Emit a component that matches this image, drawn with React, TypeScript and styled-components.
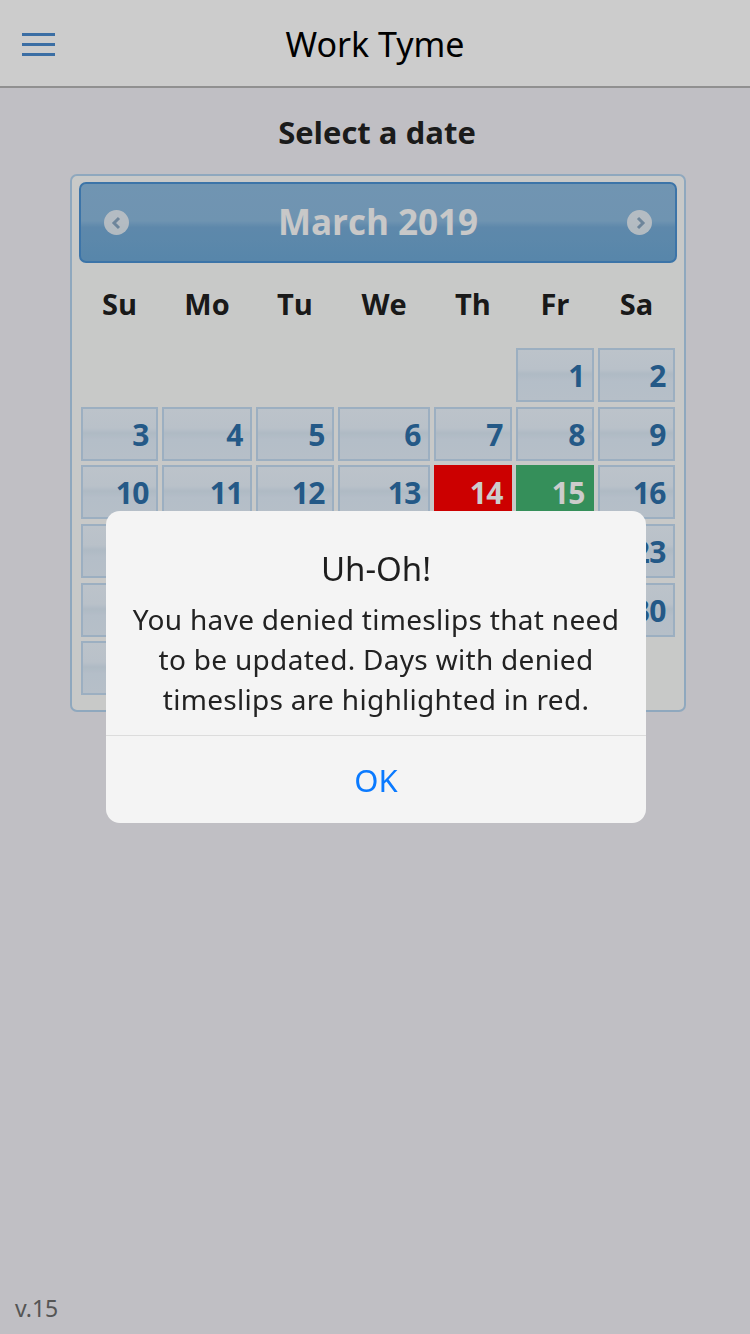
import React from "react";
import styled, { createGlobalStyle } from "styled-components";

const GlobalStyle = createGlobalStyle`
  html, body { margin: 0; padding: 0; }
  body {
    background: #f0eff5;
    font-family: "Noto Sans", "Open Sans", "DejaVu Sans", sans-serif;
    color: #222;
  }
  * { box-sizing: border-box; }
`;

const boldFont = `"Open Sans", "Noto Sans", "DejaVu Sans", sans-serif`;

const Page = styled.div`
  min-height: 1334px;
  display: flex;
  flex-direction: column;
`;

const Header = styled.header`
  height: 88px;
  background: #ffffff;
  border-bottom: 2px solid #b4b4b4;
  display: grid;
  grid-template-columns: 1fr auto 1fr;
  align-items: center;
  padding: 0 22px;
`;

const MenuButton = styled.button`
  justify-self: start;
  width: 33px;
  height: 23px;
  padding: 0;
  border: 0;
  background: transparent;
  display: flex;
  flex-direction: column;
  justify-content: space-between;
  margin-top: 3px;
`;

const MenuLine = styled.span`
  display: block;
  height: 3px;
  width: 100%;
  background: #4a8acd;
`;

const Title = styled.h1`
  margin: 0;
  font-size: 34px;
  font-weight: 400;
  color: #000;
  margin-top: 2px;
`;

const Main = styled.main`
  display: flex;
  flex-direction: column;
`;

const Heading = styled.h2`
  margin: 22px 0 20px;
  text-align: center;
  font-family: ${boldFont};
  font-size: 31px;
  line-height: 44px;
  font-weight: 700;
  color: #222;
  padding-left: 4px;
`;

const Calendar = styled.div`
  width: 616px;
  margin-left: 70px;
  background: #fbfcfb;
  border: 2px solid #b3d2ee;
  border-radius: 7px;
  padding: 6px 7px 15px;
  font-family: ${boldFont};
`;

const CalHeader = styled.div`
  height: 81px;
  border: 2px solid #4b92d2;
  border-radius: 7px;
  background: linear-gradient(
    to bottom,
    #8dbbdf 0%,
    #8bb9de 48%,
    #76abd6 56%,
    #6ea8d5 100%
  );
  display: flex;
  align-items: center;
  padding: 0 23px;
`;

const NavIcon = styled.span`
  width: 25px;
  height: 25px;
  border-radius: 50%;
  background: #f2f5f8;
  opacity: 0.85;
  display: flex;
  align-items: center;
  justify-content: center;
`;

const MonthTitle = styled.div`
  flex: 1;
  text-align: center;
  font-size: 35px;
  font-weight: 700;
  color: #fafafa;
  margin-top: -2px;
`;

const Grid = styled.div`
  display: grid;
  grid-template-columns: 77px 90px 78px 92px 78px 78px 77px;
  column-gap: 4px;
  row-gap: 4.7px;
  margin: 0 2px;
`;

const DayNames = styled(Grid)`
  padding: 20px 0 23px;
`;

const DayName = styled.div`
  text-align: center;
  font-size: 29px;
  line-height: 42px;
  font-weight: 700;
  color: #202020;
`;

const Cell = styled.div<{ $variant?: "default" | "denied" | "approved" }>`
  height: 54px;
  border: 2px solid
    ${(p) =>
      p.$variant === "denied"
        ? "#ff0000"
        : p.$variant === "approved"
        ? "#43b371"
        : "#c3dbf2"};
  background: ${(p) =>
    p.$variant === "denied"
      ? "#ff0000"
      : p.$variant === "approved"
      ? "#43b371"
      : "linear-gradient(to bottom, #ebf4fd 0%, #e8f2fc 38%, #dbe9f6 48%, #e2eefa 62%, #e4effa 100%)"};
  color: ${(p) => (p.$variant && p.$variant !== "default" ? "#ffffff" : "#2e70a9")};
  font-size: 30px;
  font-weight: 700;
  text-align: right;
  line-height: 52px;
  padding-right: 7px;
  letter-spacing: -0.5px;
`;

const Empty = styled.div`
  height: 54px;
`;

const Version = styled.div`
  margin-top: auto;
  padding: 0 0 10px 15px;
  font-size: 23px;
  color: #6b6b6b;
`;

const Overlay = styled.div`
  position: fixed;
  inset: 0;
  background: rgba(0, 0, 0, 0.2);
  display: flex;
  align-items: center;
  justify-content: center;
`;

const Dialog = styled.div`
  width: 540px;
  margin-left: 2px;
  background: #f4f4f4;
  border-radius: 14px;
  overflow: hidden;
  text-align: center;
`;

const DialogBody = styled.div`
  padding: 35px 18px 16px;
  border-bottom: 1px solid #dcdcdc;
`;

const DialogTitle = styled.div`
  font-size: 33px;
  line-height: 46px;
  color: #1e1e1e;
  margin-bottom: 7px;
`;

const DialogText = styled.div`
  font-size: 28px;
  line-height: 40px;
  color: #222;
  letter-spacing: 0.3px;
`;

const DialogButton = styled.button`
  display: block;
  width: 100%;
  height: 87px;
  border: 0;
  background: transparent;
  font-family: inherit;
  font-size: 31px;
  color: #0a7aff;
  padding: 0;
`;

const weekDays = ["Su", "Mo", "Tu", "We", "Th", "Fr", "Sa"];

function ChevronIcon({ dir }: { dir: "left" | "right" }) {
  return (
    <NavIcon>
      <svg width="12" height="14" viewBox="0 0 12 14">
        {dir === "left" ? (
          <path d="M8 2 L3 7 L8 12" fill="none" stroke="#8ba6be" strokeWidth="3" />
        ) : (
          <path d="M4 2 L9 7 L4 12" fill="none" stroke="#8ba6be" strokeWidth="3" />
        )}
      </svg>
    </NavIcon>
  );
}

export default function App() {
  const cells: (number | null)[] = [];
  for (let i = 0; i < 5; i++) cells.push(null);
  for (let d = 1; d <= 31; d++) cells.push(d);

  return (
    <>
      <GlobalStyle />
      <Page>
        <Header>
          <MenuButton aria-label="Menu">
            <MenuLine />
            <MenuLine />
            <MenuLine />
          </MenuButton>
          <Title>Work Tyme</Title>
          <span />
        </Header>
        <Main>
          <Heading>Select a date</Heading>
          <Calendar>
            <CalHeader>
              <ChevronIcon dir="left" />
              <MonthTitle>March 2019</MonthTitle>
              <ChevronIcon dir="right" />
            </CalHeader>
            <DayNames>
              {weekDays.map((d) => (
                <DayName key={d}>{d}</DayName>
              ))}
            </DayNames>
            <Grid>
              {cells.map((d, i) =>
                d === null ? (
                  <Empty key={"e" + i} />
                ) : (
                  <Cell
                    key={d}
                    $variant={d === 14 ? "denied" : d === 15 ? "approved" : "default"}
                  >
                    {d}
                  </Cell>
                )
              )}
            </Grid>
          </Calendar>
        </Main>
        <Version>v.15</Version>
      </Page>
      <Overlay>
        <Dialog>
          <DialogBody>
            <DialogTitle>Uh-Oh!</DialogTitle>
            <DialogText>
              You have denied timeslips that need to be updated. Days with denied
              timeslips are highlighted in red.
            </DialogText>
          </DialogBody>
          <DialogButton>OK</DialogButton>
        </Dialog>
      </Overlay>
    </>
  );
}
